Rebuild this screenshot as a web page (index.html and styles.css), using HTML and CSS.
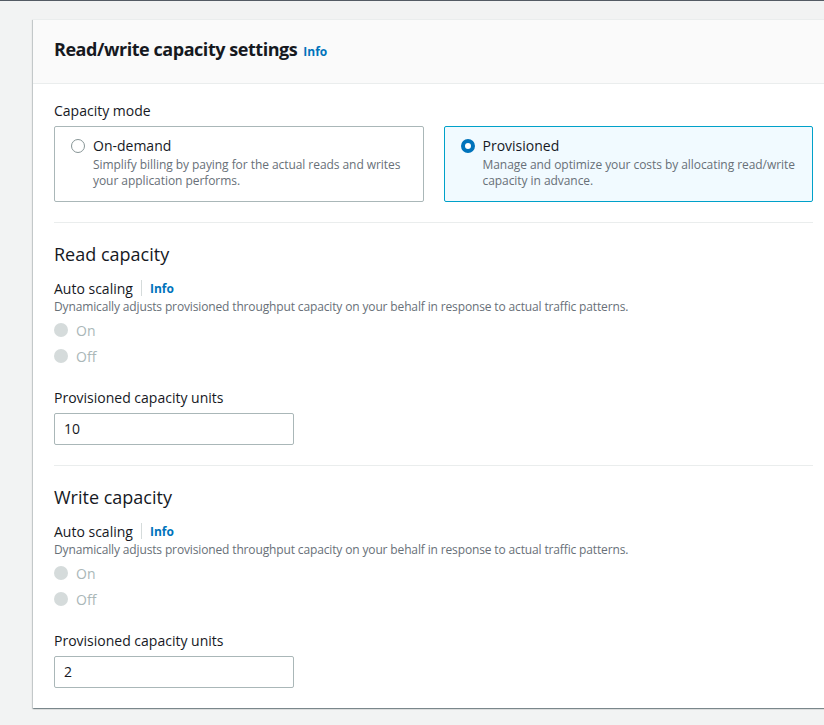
FILE: index.html
```html
<!DOCTYPE html>
<html lang="en">
<head>
<meta charset="utf-8">
<title>Read/write capacity settings</title>
<link rel="stylesheet" href="styles.css">
</head>
<body>
<div class="page">
  <section class="card">
    <header class="card-header">
      <h2 class="card-title">Read/write capacity settings</h2>
      <a class="info info-title" href="#">Info</a>
    </header>
    <div class="card-body">
      <div class="field-label">Capacity mode</div>
      <div class="tiles">
        <div class="tile">
          <div class="tile-head"><span class="radio"></span><span class="tile-label">On-demand</span></div>
          <div class="tile-desc">Simplify billing by paying for the actual reads and writes your application performs.</div>
        </div>
        <div class="tile tile-selected">
          <div class="tile-head"><span class="radio radio-checked"></span><span class="tile-label">Provisioned</span></div>
          <div class="tile-desc">Manage and optimize your costs by allocating read/write capacity in advance.</div>
        </div>
      </div>

      <div class="divider"></div>

      <h3 class="section-title">Read capacity</h3>
      <div class="label-row"><span class="field-label-inline">Auto scaling</span><span class="sep"></span><a class="info" href="#">Info</a></div>
      <div class="desc">Dynamically adjusts provisioned throughput capacity on your behalf in response to actual traffic patterns.</div>
      <div class="radio-group">
        <div class="radio-row"><span class="radio radio-disabled"></span><span class="radio-text">On</span></div>
        <div class="radio-row"><span class="radio radio-disabled"></span><span class="radio-text">Off</span></div>
      </div>
      <div class="field-label spaced">Provisioned capacity units</div>
      <div class="input">10</div>

      <div class="divider"></div>

      <h3 class="section-title">Write capacity</h3>
      <div class="label-row"><span class="field-label-inline">Auto scaling</span><span class="sep"></span><a class="info" href="#">Info</a></div>
      <div class="desc">Dynamically adjusts provisioned throughput capacity on your behalf in response to actual traffic patterns.</div>
      <div class="radio-group">
        <div class="radio-row"><span class="radio radio-disabled"></span><span class="radio-text">On</span></div>
        <div class="radio-row"><span class="radio radio-disabled"></span><span class="radio-text">Off</span></div>
      </div>
      <div class="field-label spaced">Provisioned capacity units</div>
      <div class="input">2</div>
    </div>
  </section>
</div>
</body>
</html>
```

FILE: styles.css
```css
* { box-sizing: border-box; }
html, body {
  margin: 0;
  padding: 0;
  background: #f2f3f3;
  font-family: "Open Sans", "Noto Sans", sans-serif;
  color: #16191f;
  overflow: hidden;
}
.page {
  border-top: 1px solid #545b64;
  padding: 18px 0 0 33px;
  height: 725px;
}
.card {
  width: 801px;
  background: #fff;
  border-top: 1px solid #eaeded;
  box-shadow: 0 1px 1px 0 rgba(0,28,36,.3), 1px 1px 1px 0 rgba(0,28,36,.15), -1px 1px 1px 0 rgba(0,28,36,.15);
}
.card-header {
  background: #fafafa;
  border-bottom: 1px solid #eaeded;
  padding: 18px 21px 23px;
  display: flex;
  align-items: baseline;
  gap: 6px;
}
.card-title {
  margin: 0;
  font-size: 18px;
  line-height: 22px;
  font-weight: 700;
  letter-spacing: -0.45px;
}
.info {
  color: #0073bb;
  font-size: 12px;
  font-weight: 700;
  text-decoration: none;
}
.card-body {
  padding: 16px 21px 20px 21px;
}
.field-label {
  font-size: 14px;
  line-height: 22px;
  margin-bottom: 4px;
}
.field-label.spaced { margin-top: 20px; }
.tiles {
  display: grid;
  grid-template-columns: 1fr 1fr;
  gap: 20px;
}
.tile {
  border: 1px solid #aab7b8;
  border-radius: 2px;
  padding: 8px 16px 11px;
  height: 76px;
}
.tile-selected {
  border-color: #00a1c9;
  background: #f1faff;
}
.tile-head {
  display: flex;
  align-items: center;
  gap: 8px;
  height: 22px;
}
.tile-label {
  font-size: 14px;
  line-height: 22px;
}
.tile-desc {
  font-size: 12px;
  line-height: 16px;
  color: #687078;
  padding-left: 22px;
  letter-spacing: -0.06px;
}
.radio {
  width: 14px;
  height: 14px;
  border-radius: 50%;
  border: 1.5px solid #879596;
  flex: none;
  background: #fff;
  display: inline-block;
}
.radio-checked {
  border: 4px solid #0073bb;
}
.radio-disabled {
  border: none;
  background: #d5dbdb;
}
.divider {
  height: 1px;
  background: #eaeded;
  margin: 20px 0;
}
.section-title {
  margin: 0 0 12px;
  font-size: 18px;
  line-height: 22px;
  font-weight: 400;
}
.label-row {
  display: flex;
  align-items: center;
  height: 22px;
}
.field-label-inline {
  font-size: 14px;
}
.sep {
  width: 1px;
  height: 16px;
  background: #d5dbdb;
  margin: 0 8px;
}
.desc {
  font-size: 12px;
  line-height: 16px;
  color: #687078;
  letter-spacing: -0.14px;
}
.radio-group {
  margin-top: 4px;
  display: flex;
  flex-direction: column;
  gap: 4px;
}
.radio-row {
  display: flex;
  align-items: center;
  gap: 8px;
  height: 22px;
}
.radio-text {
  font-size: 14px;
  color: #aab7b8;
}
.input {
  width: 240px;
  height: 32px;
  border: 1px solid #aab7b8;
  border-radius: 2px;
  padding: 0 9px;
  font-size: 14px;
  line-height: 30px;
}
```
